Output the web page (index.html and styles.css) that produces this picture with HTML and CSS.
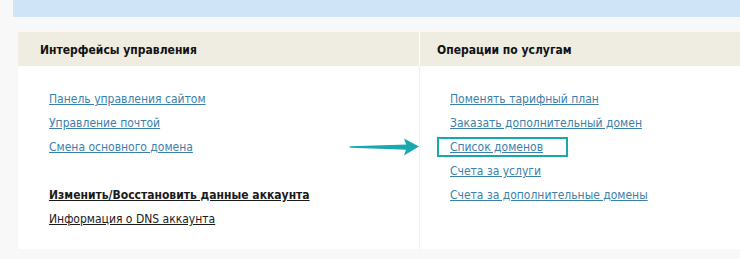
FILE: index.html
```html
<!DOCTYPE html>
<html lang="ru">
<head>
<meta charset="utf-8">
<link rel="stylesheet" href="styles.css">
</head>
<body>
<div class="topbar"></div>
<div class="panel">
  <div class="col">
    <div class="head">Интерфейсы управления</div>
    <div class="body">
      <a class="lnk" href="#">Панель управления сайтом</a>
      <a class="lnk" href="#">Управление почтой</a>
      <a class="lnk" href="#">Смена основного домена</a>
      <div class="spacer"></div>
      <a class="lnk dark bold" href="#">Изменить/Восстановить данные аккаунта</a>
      <a class="lnk dark" href="#">Информация о DNS аккаунта</a>
    </div>
  </div>
  <div class="col right">
    <div class="head">Операции по услугам</div>
    <div class="body">
      <a class="lnk" href="#">Поменять тарифный план</a>
      <a class="lnk" href="#">Заказать дополнительный домен</a>
      <a class="lnk boxed" href="#">Список доменов<svg class="arrow" width="72" height="20" viewBox="0 0 72 20"><path d="M2 9.2 Q1 10 2 10.8 L59 12.8 L59 7.4 Z" fill="#19a8ad"/><path d="M56 1.5 L71 9.6 L56 18.5 L59 9.8 Z" fill="#19a8ad"/></svg></a>
      <a class="lnk" href="#">Счета за услуги</a>
      <a class="lnk" href="#">Счета за дополнительные домены</a>
    </div>
  </div>
</div>
</body>
</html>
```
FILE: styles.css
```css
html, body {
  margin: 0;
  padding: 0;
  background: #f8f8f8;
  width: 740px;
  height: 259px;
  overflow: hidden;
  font-family: "DejaVu Sans Condensed", "DejaVu Sans", sans-serif;
  font-size: 12px;
}
.topbar {
  margin-left: 13px;
  height: 17px;
  background: #d0e4f7;
}
.panel {
  margin: 15px 0 0 18px;
  display: flex;
  background: #fff;
  height: 217px;
}
.col {
  width: 401px;
  display: flex;
  flex-direction: column;
}
.col.right {
  flex: 1;
  border-left: 1px solid #f0f0f0;
}
.head {
  background: #efede2;
  height: 34px;
  line-height: 36px;
  padding-left: 22px;
  font-weight: bold;
  font-size: 12px;
  color: #111;
}
.col.right .head {
  padding-left: 17px;
  border-left: 1px solid #fff;
  margin-left: -1px;
}
.body {
  display: flex;
  flex-direction: column;
  align-items: flex-start;
  padding: 26px 0 0 31px;
  gap: 10px;
}
.col.right .body {
  padding-left: 30px;
}
.lnk {
  color: #3b80aa;
  text-decoration: underline;
  line-height: 14px;
  white-space: nowrap;
}
.lnk.dark { color: #1a1a1a; }
.lnk.bold { font-weight: bold; }
.spacer { height: 14px; }
.boxed {
  position: relative;
  outline: 2px solid #17a8aa;
  padding: 1px 23px 1px 11px;
  margin: -1px 0 -1px -11px;
}
.arrow {
  position: absolute;
  left: -91px;
  top: -2px;
}
```
